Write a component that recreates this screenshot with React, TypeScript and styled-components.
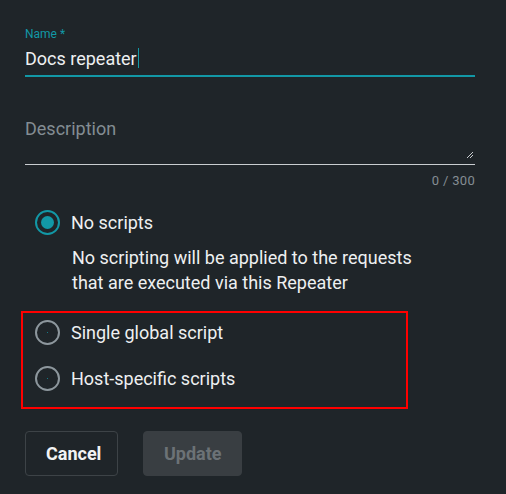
import React from "react";
import styled, { createGlobalStyle } from "styled-components";

const Global = createGlobalStyle`
  html, body { margin: 0; padding: 0; background: #1f2529; }
  body { font-family: "Roboto", "Liberation Sans", sans-serif; color: #e6e9ea; }
  * { box-sizing: border-box; }
`;

const Page = styled.div`
  width: 506px;
  height: 494px;
  background: #1f2529;
  padding: 27px 31px 0 25px;
  display: flex;
  flex-direction: column;
  overflow: hidden;
`;

const Field = styled.div`
  display: flex;
  flex-direction: column;
  width: 450px;
`;

const Label = styled.label`
  font-size: 12px;
  line-height: 14px;
  color: #1298a6;
`;

const InputRow = styled.div<{ $focused?: boolean }>`
  display: flex;
  align-items: center;
  height: 36px;
  border-bottom: ${(p) => (p.$focused ? "2px solid #1298a6" : "1px solid #c9cdd0")};
`;

const Value = styled.span`
  font-size: 18px;
  color: #eef0f1;
`;

const Caret = styled.span`
  display: inline-block;
  width: 1px;
  height: 20px;
  background: #1298a6;
  margin-left: 1px;
`;

const TextArea = styled.div`
  height: 57px;
  margin-top: 31px;
  border-bottom: 1px solid #c9cdd0;
  padding-top: 10px;
  position: relative;
  font-size: 18px;
  color: #838d93;
`;

const Resize = styled.svg`
  position: absolute;
  right: 1px;
  bottom: 5px;
`;

const Counter = styled.div`
  text-align: right;
  font-size: 13px;
  color: #848d93;
  margin-top: 8px;
  letter-spacing: 0.3px;
`;

const Options = styled.div`
  display: flex;
  flex-direction: column;
  margin-top: 17px;
`;

const OptionRow = styled.div`
  display: flex;
  align-items: center;
  gap: 11px;
  height: 34px;
  font-size: 18px;
  color: #eef0f1;
  padding-left: 10px;
`;

const Radio = styled.span<{ $checked?: boolean }>`
  width: 25px;
  height: 25px;
  border-radius: 50%;
  border: 2px solid ${(p) => (p.$checked ? "#1298a6" : "#8d979d")};
  display: flex;
  align-items: center;
  justify-content: center;
  &::after {
    content: "";
    width: ${(p) => (p.$checked ? "13px" : "1px")};
    height: ${(p) => (p.$checked ? "13px" : "1px")};
    border-radius: 50%;
    background: #1298a6;
  }
`;

const Help = styled.p`
  margin: 6px 0 0 47px;
  font-size: 18px;
  line-height: 25px;
  color: #eef0f1;
  width: 360px;
`;

const Highlight = styled.div`
  margin: 16px 0 0 -4px;
  width: 387px;
  height: 98px;
  border: 2px solid #ff0000;
  display: flex;
  flex-direction: column;
  padding: 2px 0 0 2px;
  gap: 12px;
`;

const Actions = styled.div`
  display: flex;
  gap: 25px;
  margin-top: 22px;
`;

const Button = styled.button<{ $variant: "outline" | "disabled" }>`
  height: 45px;
  border-radius: 4px;
  font-family: inherit;
  font-size: 18px;
  font-weight: 700;
  padding: 0 20px;
  border: 1px solid ${(p) => (p.$variant === "outline" ? "#3d4347" : "#393e42")};
  background: ${(p) => (p.$variant === "outline" ? "transparent" : "#393e42")};
  color: ${(p) => (p.$variant === "outline" ? "#f2f3f4" : "#6c7276")};
`;

export default function App() {
  return (
    <>
      <Global />
      <Page>
        <Field>
          <Label>Name *</Label>
          <InputRow $focused>
            <Value>Docs repeater</Value>
            <Caret />
          </InputRow>
        </Field>
        <Field>
          <TextArea>
            Description
            <Resize width="8" height="8" viewBox="0 0 8 8">
              <path d="M7 1 L1 7 M7 4 L4 7" stroke="#c9cdd0" strokeWidth="1" />
            </Resize>
          </TextArea>
          <Counter>0 / 300</Counter>
        </Field>
        <Options>
          <OptionRow>
            <Radio $checked />
            No scripts
          </OptionRow>
          <Help>
            No scripting will be applied to the requests that are executed via this Repeater
          </Help>
          <Highlight>
            <OptionRow>
              <Radio />
              Single global script
            </OptionRow>
            <OptionRow>
              <Radio />
              Host-specific scripts
            </OptionRow>
          </Highlight>
        </Options>
        <Actions>
          <Button $variant="outline" style={{ width: 93 }}>Cancel</Button>
          <Button $variant="disabled" style={{ width: 99 }}>Update</Button>
        </Actions>
      </Page>
    </>
  );
}
